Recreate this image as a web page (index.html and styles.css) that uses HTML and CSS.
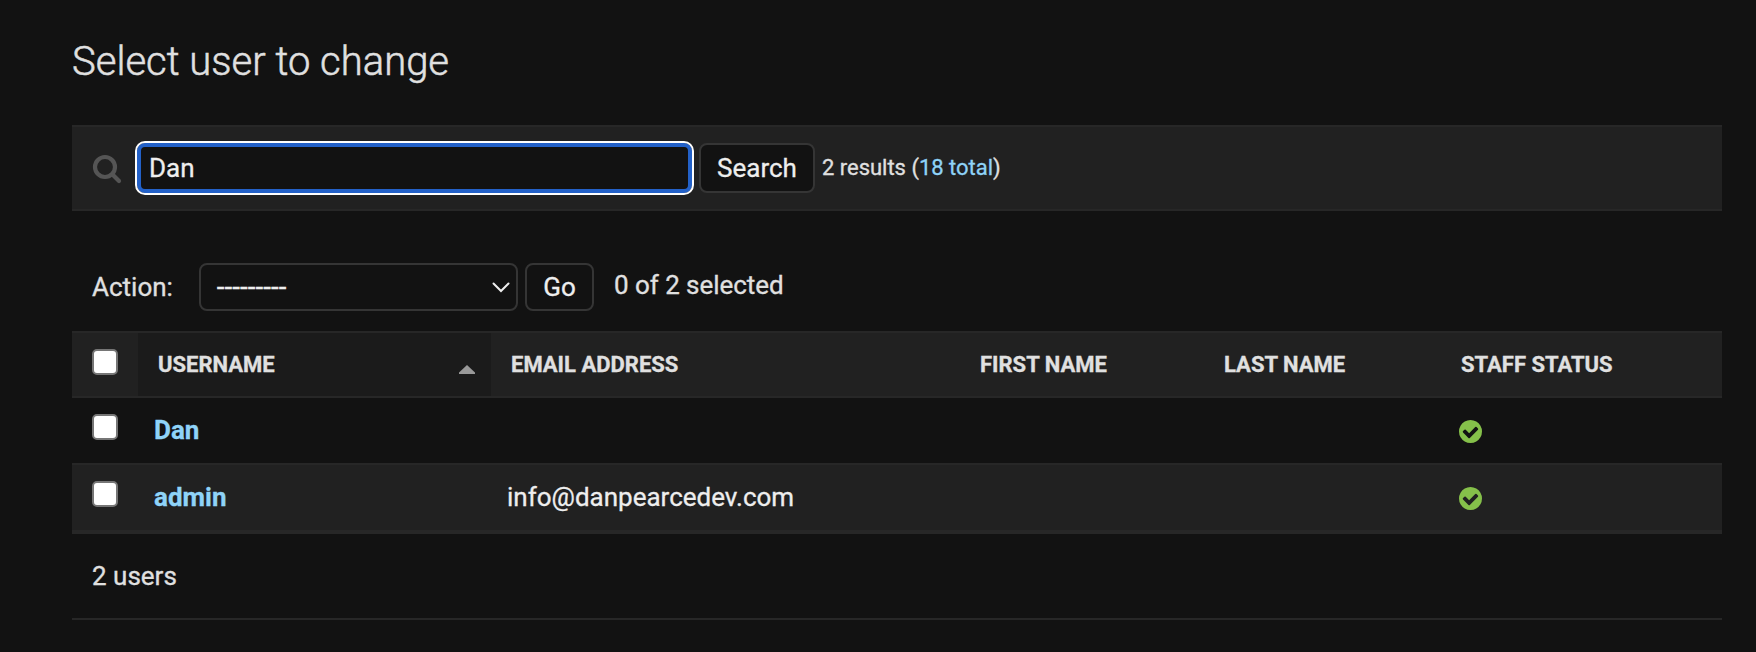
FILE: index.html
```html
<!DOCTYPE html>
<html lang="en">
<head>
<meta charset="utf-8">
<title>Select user to change</title>
<link rel="stylesheet" href="styles.css">
</head>
<body>
<svg class="sprite" width="0" height="0" aria-hidden="true">
  <symbol id="yes" viewBox="0 0 1536 1536">
    <path d="M1284 606q0-28-18-46l-91-90q-19-19-45-19t-45 19l-408 407-226-226q-19-19-45-19t-45 19l-91 90q-18 18-18 46 0 27 18 45l362 362q19 19 45 19 27 0 46-19l543-543q18-18 18-45zm252 162q0 209-103 385.500t-279.500 279.500-385.500 103-385.500-103-279.500-279.500-103-385.500 103-385.500 279.500-279.500 385.500-103 385.500 103 279.500 279.500 103 385.500z"/>
  </symbol>
</svg>
<main class="content">
  <h1 class="title">Select user to change</h1>

  <div class="toolbar">
    <svg class="search-icon" viewBox="0 0 30 30">
      <circle cx="13" cy="13" r="10"/>
      <path d="M20.500 20.500L27 27"/>
    </svg>
    <div class="search-input" role="textbox">Dan</div>
    <button class="button search-button">Search</button>
    <span class="results">2 results (<a class="link">18 total</a>)</span>
  </div>

  <div class="actions">
    <span class="action-label">Action:</span>
    <div class="select" role="combobox">
      <span class="select-value">---------</span>
      <svg class="chevron" viewBox="0 0 18 11"><path d="M1.500 1.500L9 9l7.500-7.500"/></svg>
    </div>
    <button class="button go-button">Go</button>
    <span class="counter">0 of 2 selected</span>
  </div>

  <div class="table">
    <div class="row head">
      <div class="check-cell"><span class="checkbox"></span></div>
      <div class="cell sorted"><span>USERNAME</span><svg class="arrow" viewBox="0 0 16 9"><path d="M8 0l8 7.500V9H0V7.500z"/></svg></div>
      <div class="cell">EMAIL ADDRESS</div>
      <div class="cell">FIRST NAME</div>
      <div class="cell">LAST NAME</div>
      <div class="cell">STAFF STATUS</div>
    </div>
    <div class="row first">
      <div class="check-cell"><span class="checkbox"></span></div>
      <div class="cell"><a class="link user">Dan</a></div>
      <div class="cell"></div>
      <div class="cell"></div>
      <div class="cell"></div>
      <div class="cell"><svg class="yes"><use href="#yes"/></svg></div>
    </div>
    <div class="row second">
      <div class="check-cell"><span class="checkbox"></span></div>
      <div class="cell"><a class="link user">admin</a></div>
      <div class="cell">info@danpearcedev.com</div>
      <div class="cell"></div>
      <div class="cell"></div>
      <div class="cell"><svg class="yes"><use href="#yes"/></svg></div>
    </div>
  </div>

  <p class="paginator">2 users</p>
</main>
</body>
</html>
```
FILE: styles.css
```css
* { box-sizing: border-box; }

body {
  margin: 0;
  background: #121212;
  color: #eee;
  font: 400 26px/30px Roboto, sans-serif;
  -webkit-text-stroke: 0.3px currentColor;
}

.sprite { display: block; }

.content {
  width: 1650px;
  margin-left: 72px;
  padding-top: 38px;
}

.title {
  margin: 0 0 39px;
  font-size: 40px;
  font-weight: 300;
  line-height: 48px;
  color: #e0e0e0;
  -webkit-text-stroke-width: 0.5px;
}

.link { color: #8fd3f8; }

.toolbar {
  display: flex;
  align-items: center;
  height: 86px;
  padding-left: 20px;
  background: #212121;
  border: solid #272727;
  border-width: 2px 0;
}

.search-icon {
  width: 30px;
  height: 30px;
  margin: 2px 13px 0 0;
  fill: none;
  stroke: #555;
  stroke-width: 4.2;
  stroke-linecap: round;
}

.search-input {
  width: 559px;
  height: 54px;
  padding: 6px 7px 6px 12px;
  border: 2px solid #fff;
  border-radius: 10px;
  background: #121212;
  box-shadow: inset 0 0 0 4px #2361c8;
  line-height: 38px;
}

.button {
  padding: 0;
  border: 2px solid #353535;
  border-radius: 8px;
  background: #121212;
  color: #eee;
  font: inherit;
}

.search-button {
  width: 116px;
  height: 50px;
  margin-left: 5px;
}

.results {
  margin: 0 0 1px 7px;
  font-size: 22px;
  letter-spacing: -0.02px;
  color: #e0e0e0;
}

.actions {
  display: flex;
  align-items: center;
  height: 48px;
  margin: 52px 0 20px;
  padding-left: 20px;
  color: #e0e0e0;
}

.action-label { width: 107px; }

.select {
  display: flex;
  align-items: center;
  justify-content: space-between;
  width: 319px;
  height: 48px;
  padding: 0 6px 0 16px;
  border: 2px solid #353535;
  border-radius: 8px;
  color: #eee;
}

.select-value {
  letter-spacing: 0.58px;
  -webkit-text-stroke-width: 0.7px;
}

.chevron {
  width: 18px;
  height: 11px;
  fill: none;
  stroke: #eee;
  stroke-width: 2;
  stroke-linecap: round;
}

.go-button {
  width: 69px;
  height: 48px;
  margin-left: 7px;
}

.counter {
  margin: 0 0 4px 20px;
  letter-spacing: -0.05px;
}

.row {
  display: grid;
  grid-template-columns: 66px 353px 469px 244px 237px 281px;
}

.head {
  height: 67px;
  background: #212121;
  border: solid #272727;
  border-width: 2px 0;
  font-size: 22px;
  font-weight: 700;
  color: #e0e0e0;
}

.cell {
  display: flex;
  align-items: center;
  padding: 0 0 2px 16px;
}

.head .cell { padding: 0 0 0 20px; }

.head .sorted {
  justify-content: space-between;
  padding-right: 16px;
  background: #1b1b1b;
}

.arrow {
  width: 16px;
  height: 9px;
  margin-top: 10px;
  fill: #999;
}

.check-cell { padding: 16px 0 0 20px; }

.checkbox {
  display: block;
  width: 26px;
  height: 26px;
  border: 2px solid #767676;
  border-radius: 5px;
  background: #fff;
}

.first { height: 65px; }

.second {
  height: 71px;
  background: #212121;
  border: solid #272727;
  border-width: 2px 0 4px;
}

.user { font-weight: 700; }

.yes {
  width: 23px;
  height: 23px;
  margin: 4px 0 0 1.500px;
  fill: #85c04a;
}

.paginator {
  height: 86px;
  margin: 0;
  padding: 27px 20px 0;
  border-bottom: 2px solid #272727;
  color: #e0e0e0;
}
```
